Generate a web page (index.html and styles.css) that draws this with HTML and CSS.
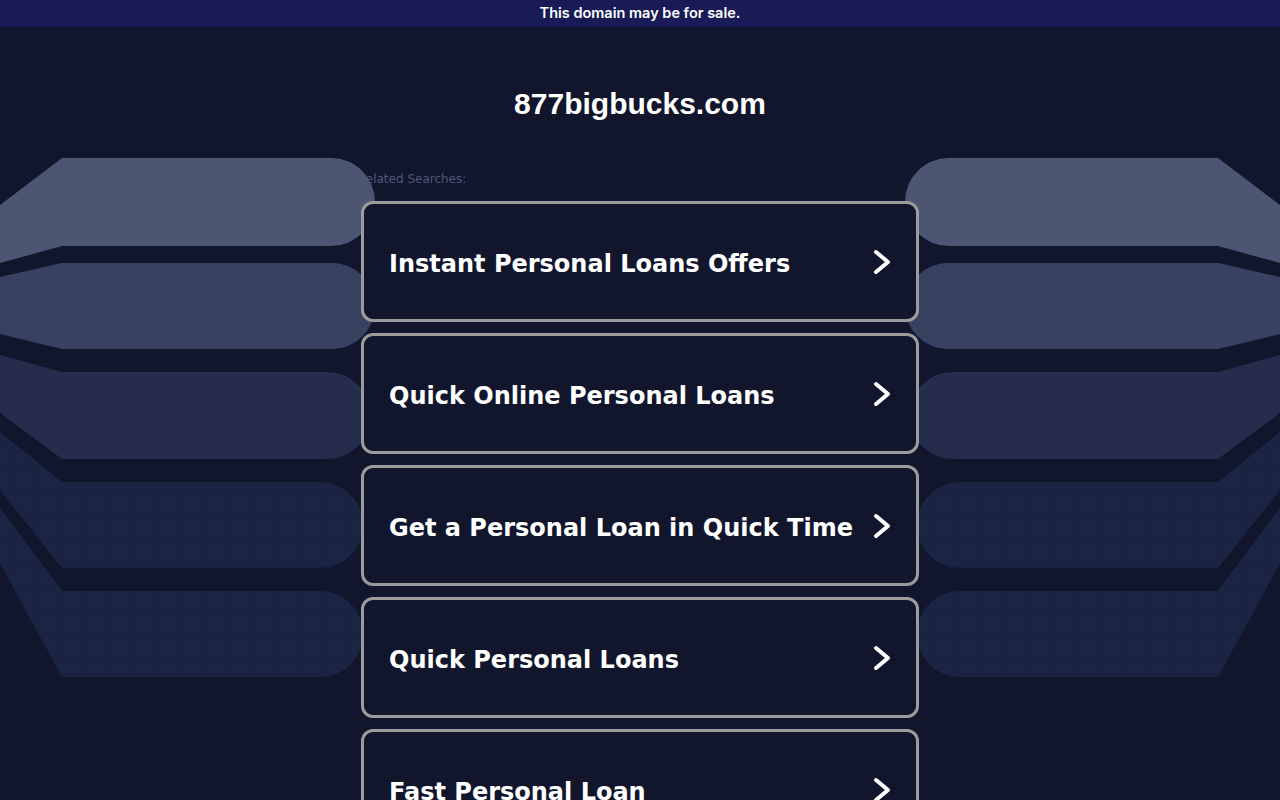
FILE: index.html
```html
<!DOCTYPE html>
<html lang="en">
<head>
<meta charset="utf-8">
<title>877bigbucks.com</title>
<link rel="stylesheet" href="styles.css">
</head>
<body>
<div class="topbar">This domain may be for sale.</div>

<svg class="bands" width="1280" height="800" viewBox="0 0 1280 800" aria-hidden="true">
  <defs>
    <pattern id="dots" width="3" height="3" patternUnits="userSpaceOnUse">
      <rect width="3" height="3" fill="#1b2343"/>
      <rect x="1" y="1" width="1" height="1" fill="#202a4c"/>
    </pattern>
    <g id="side">
      <path d="M0,205 L62,158 L331,158 A44,44 0 0 1 331,246 L62,246 L0,263 Z" fill="#4c5672"/>
      <path d="M0,277 L62,263 L332,263 A43,43 0 0 1 332,349 L62,349 L0,334 Z" fill="#394160"/>
      <path d="M0,355 L62,372 L327,372 A43.5,43.5 0 0 1 327,459 L62,459 L0,413 Z" fill="#262d4c"/>
      <path d="M0,432 L62,482 L320,482 A43,43 0 0 1 320,568 L62,568 L0,490 Z" fill="url(#dots)"/>
      <path d="M0,508 L62,591 L320,591 A43,43 0 0 1 320,677 L62,677 L0,563 Z" fill="url(#dots)"/>
    </g>
  </defs>
  <use href="#side"/>
  <use href="#side" transform="translate(1280,0) scale(-1,1)"/>
</svg>

<main class="wrap">
  <h1 class="domain">877bigbucks.com</h1>
  <div class="label">Related Searches:</div>
  <ul class="links">
    <li><a class="card" href="#"><span class="card-text">Instant Personal Loans Offers</span><svg class="chev" width="20" height="30" viewBox="0 0 20 30"><path d="M5,5 L17,15 L5,25"/></svg></a></li>
    <li><a class="card" href="#"><span class="card-text">Quick Online Personal Loans</span><svg class="chev" width="20" height="30" viewBox="0 0 20 30"><path d="M5,5 L17,15 L5,25"/></svg></a></li>
    <li><a class="card" href="#"><span class="card-text">Get a Personal Loan in Quick Time</span><svg class="chev" width="20" height="30" viewBox="0 0 20 30"><path d="M5,5 L17,15 L5,25"/></svg></a></li>
    <li><a class="card" href="#"><span class="card-text">Quick Personal Loans</span><svg class="chev" width="20" height="30" viewBox="0 0 20 30"><path d="M5,5 L17,15 L5,25"/></svg></a></li>
    <li><a class="card" href="#"><span class="card-text">Fast Personal Loan</span><svg class="chev" width="20" height="30" viewBox="0 0 20 30"><path d="M5,5 L17,15 L5,25"/></svg></a></li>
  </ul>
</main>
</body>
</html>
```

FILE: styles.css
```css
html {
  overflow: hidden;
}

body {
  margin: 0;
  background: #11162d;
  color: #ffffff;
  font-family: "DejaVu Sans", sans-serif;
  position: relative;
  min-height: 800px;
}

.topbar {
  height: 27px;
  line-height: 26px;
  background: #181b56;
  text-align: center;
  font-family: Inter, "Noto Sans", sans-serif;
  font-weight: 600;
  font-size: 14.5px;
  color: #ffffff;
}

.bands {
  position: absolute;
  top: 0;
  left: 0;
  z-index: 0;
  pointer-events: none;
}

.wrap {
  width: 564px;
  margin: 0 auto;
}

.domain {
  margin: 60px 0 0;
  font-family: "Liberation Sans", Arial, sans-serif;
  font-weight: 700;
  font-size: 30px;
  line-height: 34px;
  text-align: center;
  color: #ffffff;
}

.label {
  margin-top: 51px;
  font-family: "DejaVu Sans", sans-serif;
  font-size: 12px;
  line-height: 14px;
  color: #4e5878;
}

.links {
  list-style: none;
  margin: 15px 0 0;
  padding: 0;
}

.links li {
  margin: 0 3px 11px;
}

.card {
  position: relative;
  z-index: 1;
  box-sizing: border-box;
  height: 121px;
  display: flex;
  align-items: center;
  padding: 5px 25px 0;
  border: 3px solid #9b9b9b;
  border-radius: 12px;
  background: #11162d;
  color: #ffffff;
  text-decoration: none;
}

.card-text {
  flex: 1;
  font-family: "DejaVu Sans", sans-serif;
  font-weight: 700;
  font-size: 24px;
  line-height: 28px;
  white-space: nowrap;
}

.chev {
  flex: none;
  display: block;
  margin-top: -4px;
}

.chev path {
  fill: none;
  stroke: #ffffff;
  stroke-width: 4;
  stroke-linecap: round;
  stroke-linejoin: round;
}
```
